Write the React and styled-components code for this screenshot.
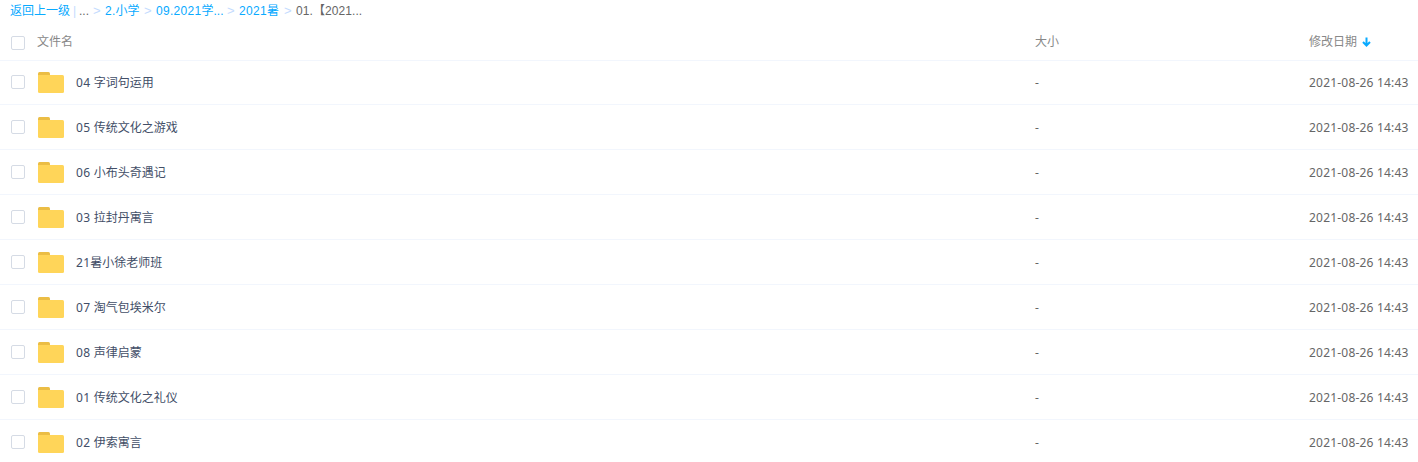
import React, { useState } from 'react';
import styled, { createGlobalStyle } from 'styled-components';

const GlobalStyle = createGlobalStyle`
  * {
    box-sizing: border-box;
  }

  body {
    margin: 0;
    background: #fff;
    font-family: 'Noto Sans', 'Noto Sans CJK SC', sans-serif;
    font-size: 12px;
    overflow: hidden;
  }
`;

const StyledBreadcrumb = styled.nav`
  display: flex;
  height: 22px;
  padding-left: 10px;
  line-height: 22px;
  font-family: 'Liberation Sans', 'Noto Sans CJK SC', sans-serif;
  white-space: nowrap;
`;

const StyledCrumb = styled.span`
  flex: none;
  width: ${(props) => props.$width}px;
  color: ${(props) => (props.$current ? '#666' : '#09aaff')};
  cursor: ${(props) => (props.$current ? 'default' : 'pointer')};
`;

const StyledSeparator = styled.span`
  flex: none;
  width: ${(props) => props.$width || 12}px;
  font-size: ${(props) => (props.$width ? 12 : 13)}px;
  color: #c4dbfe;
`;

const Latin = styled.span`
  letter-spacing: ${(props) => props.$spacing || 0.3}px;
`;

const StyledRow = styled.div`
  display: grid;
  grid-template-columns: 26px 39px 959px 274px 1fr;
  align-items: center;
  height: 45px;
  padding-left: 11px;
  border-bottom: 1px solid #f2f6fd;
  color: #424e67;
  white-space: nowrap;

  ${(props) => props.$first && 'height: 44px; padding-bottom: 1px;'}
`;

const StyledHeader = styled(StyledRow)`
  grid-template-columns: 26px 998px 274px 1fr;
  height: 39px;
  padding-top: 4px;
  color: #888;
`;

const StyledCheckbox = styled.button`
  width: 14px;
  height: 14px;
  padding: 0;
  border: 1px solid #d5dbe5;
  border-radius: 2px;
  background: ${(props) => (props.$checked ? '#09aaff' : '#fff')};
  cursor: pointer;
`;

const StyledHeading = styled.span`
  display: flex;
  align-items: center;
  gap: 5px;
  line-height: 18px;
  margin-top: -2px;
`;

const StyledMeta = styled.span`
  color: #666;
`;

const StyledFolder = styled.svg`
  display: block;
  margin: 2px 0 0 1px;
`;

const crumbs = [
  { latin: '2.', name: '小学', width: 39 },
  { latin: '09.2021', name: '学', tail: '...', width: 71 },
  { latin: '2021', name: '暑', width: 45 },
];

const initialFiles = [
  ['04 ', '字词句运用'],
  ['05 ', '传统文化之游戏'],
  ['06 ', '小布头奇遇记'],
  ['03 ', '拉封丹寓言'],
  ['21', '暑小徐老师班'],
  ['07 ', '淘气包埃米尔'],
  ['08 ', '声律启蒙'],
  ['01 ', '传统文化之礼仪'],
  ['02 ', '伊索寓言'],
];

const FolderIcon = () => (
  <StyledFolder width="26" height="22" viewBox="0 0 26 22">
    <path d="M0 4V1.5Q0 0 1.5 0H10.5Q12 0 12 1.5V4Z" fill="#ebbd45" />
    <path
      d="M0 3H24.5Q26 3 26 4.5V19.5Q26 21 24.5 21H1.5Q0 21 0 19.5Z"
      fill="#ffd559"
    />
  </StyledFolder>
);

const SortIcon = () => (
  <svg width="9" height="10" viewBox="0 0 9 10">
    <path
      d="M4.5 0.5V8.5M1 5L4.5 8.5L8 5"
      fill="none"
      stroke="#09aaff"
      strokeWidth="2"
    />
  </svg>
);

const App = () => {
  const [selected, setSelected] = useState([]);
  const allSelected = selected.length === initialFiles.length;

  const toggleAll = () => {
    setSelected(allSelected ? [] : initialFiles.map((file, index) => index));
  };

  const toggleFile = (index) => {
    setSelected((prev) =>
      prev.includes(index) ? prev.filter((i) => i !== index) : [...prev, index]
    );
  };

  return (
    <>
      <GlobalStyle />
      <StyledBreadcrumb>
        <StyledCrumb $width={63}>返回上一级</StyledCrumb>
        <StyledSeparator $width={6}>|</StyledSeparator>
        <StyledCrumb $current $width={14}>
          ...
        </StyledCrumb>
        <StyledSeparator>&gt;</StyledSeparator>
        {crumbs.map((crumb) => (
          <React.Fragment key={crumb.latin}>
            <StyledCrumb $width={crumb.width}>
              <Latin>{crumb.latin}</Latin>
              {crumb.name}
              {crumb.tail}
            </StyledCrumb>
            <StyledSeparator>&gt;</StyledSeparator>
          </React.Fragment>
        ))}
        <StyledCrumb $current $width={70}>
          <Latin $spacing={0.1}>01.</Latin>【<Latin $spacing={0.1}>2021</Latin>...
        </StyledCrumb>
      </StyledBreadcrumb>
      <StyledHeader>
        <StyledCheckbox $checked={allSelected} onClick={toggleAll} />
        <StyledHeading>文件名</StyledHeading>
        <StyledHeading>大小</StyledHeading>
        <StyledHeading>
          修改日期
          <SortIcon />
        </StyledHeading>
      </StyledHeader>
      {initialFiles.map(([prefix, name], index) => (
        <StyledRow key={name} $first={index === 0}>
          <StyledCheckbox
            $checked={selected.includes(index)}
            onClick={() => toggleFile(index)}
          />
          <FolderIcon />
          <span>
            <Latin>{prefix}</Latin>
            {name}
          </span>
          <StyledMeta>-</StyledMeta>
          <StyledMeta>
            <Latin $spacing={0.2}>2021-08-26 14:43</Latin>
          </StyledMeta>
        </StyledRow>
      ))}
    </>
  );
};

export default App;
